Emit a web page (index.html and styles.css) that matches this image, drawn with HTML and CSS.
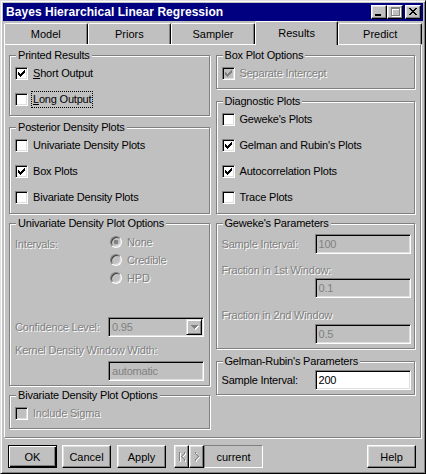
FILE: index.html
```html
<!DOCTYPE html>
<html>
<head>
<meta charset="utf-8">
<title>Bayes Hierarchical Linear Regression</title>
<link rel="stylesheet" href="styles.css">
</head>
<body>
<div class="window">
  <div class="titlebar">
    <span class="title">Bayes Hierarchical Linear Regression</span>
    <div class="tbtns">
      <span class="tbtn"><svg width="14" height="12" viewBox="0 0 14 12"><path d="M3 8h6v2H3z"/></svg></span>
      <span class="tbtn"><svg width="14" height="12" viewBox="0 0 14 12"><path fill="#fff" d="M4 2h9v2H4zM4 4h1v7H4zM12 4h1v7h-1zM4 10h9v1H4z"/><path fill="#808080" d="M3 1h9v2H3zM3 3h1v7H3zM11 3h1v7h-1zM3 9h9v1H3z"/></svg></span>
      <span class="tbtn close"><svg width="14" height="12" viewBox="0 0 14 12"><path transform="translate(3 2)" d="M0 0h2v1H0zM6 0h2v1H6zM1 1h2v1H1zM5 1h2v1H5zM2 2h4v1H2zM3 3h2v1H3zM2 4h4v1H2zM1 5h2v1H1zM5 5h2v1H5zM0 6h2v1H0zM6 6h2v1H6z"/></svg></span>
    </div>
  </div>

  <div class="tabs">
    <div class="tab">Model</div>
    <div class="tab">Priors</div>
    <div class="tab">Sampler</div>
    <div class="tab active">Results</div>
    <div class="tab">Predict</div>
  </div>

  <div class="panel">
    <div class="col col-left">
      <div class="group g-printed">
        <div class="legend">Printed Results</div>
        <div class="rows">
          <div class="row"><span class="cb"><svg class="ck" width="7" height="7" viewBox="0 0 7 7"><path d="M0 2h1v3H0zM1 3h1v3H1zM2 4h1v3H2zM3 3h1v3H3zM4 2h1v3H4zM5 1h1v3H5zM6 0h1v3H6z"/></svg></span><span class="lbl"><u>S</u>hort Output</span></div>
          <div class="row"><span class="cb"></span><span class="lbl focus"><u>L</u>ong Output</span></div>
        </div>
      </div>

      <div class="group g-posterior">
        <div class="legend">Posterior Density Plots</div>
        <div class="rows">
          <div class="row"><span class="cb"></span><span class="lbl">Univariate Density Plots</span></div>
          <div class="row"><span class="cb"><svg class="ck" width="7" height="7" viewBox="0 0 7 7"><path d="M0 2h1v3H0zM1 3h1v3H1zM2 4h1v3H2zM3 3h1v3H3zM4 2h1v3H4zM5 1h1v3H5zM6 0h1v3H6z"/></svg></span><span class="lbl">Box Plots</span></div>
          <div class="row"><span class="cb"></span><span class="lbl">Bivariate Density Plots</span></div>
        </div>
      </div>

      <div class="group g-univ">
        <div class="legend">Univariate Density Plot Options</div>
        <div class="intervals">
          <span class="flabel dis intervals-label">Intervals:</span>
          <div class="radios">
            <div class="rrow"><span class="radio on"></span><span class="dis">None</span></div>
            <div class="rrow"><span class="radio"></span><span class="dis">Credible</span></div>
            <div class="rrow"><span class="radio"></span><span class="dis">HPD</span></div>
          </div>
        </div>
        <div class="frow conf-row">
          <span class="flabel dis">Confidence Level:</span>
          <div class="field select"><span class="val">0.95</span><span class="ddbtn"><svg width="9" height="6" viewBox="0 0 9 6"><path fill="#fff" d="M2 2h7v1H2zM3 3h5v1H3zM4 4h3v1H4zM5 5h1v1H5z"/><path fill="#808080" d="M1 1h7v1H1zM2 2h5v1H2zM3 3h3v1H3zM4 4h1v1H4z"/></svg></span></div>
        </div>
        <div class="flabel dis line-label kernel-label">Kernel Density Window Width:</div>
        <div class="field indent kernel-input"><span class="val">automatic</span></div>
      </div>

      <div class="group g-bivar">
        <div class="legend">Bivariate Density Plot Options</div>
        <div class="rows">
          <div class="row"><span class="cb disabled"></span><span class="lbl dis">Include Sigma</span></div>
        </div>
      </div>
    </div>

    <div class="col col-right">
      <div class="group g-box">
        <div class="legend">Box Plot Options</div>
        <div class="rows">
          <div class="row"><span class="cb disabled"><svg class="ck" width="7" height="7" viewBox="0 0 7 7"><path d="M0 2h1v3H0zM1 3h1v3H1zM2 4h1v3H2zM3 3h1v3H3zM4 2h1v3H4zM5 1h1v3H5zM6 0h1v3H6z"/></svg></span><span class="lbl dis">Separate Intercept</span></div>
        </div>
      </div>

      <div class="group g-diag">
        <div class="legend">Diagnostic Plots</div>
        <div class="rows">
          <div class="row"><span class="cb"></span><span class="lbl">Geweke's Plots</span></div>
          <div class="row"><span class="cb"><svg class="ck" width="7" height="7" viewBox="0 0 7 7"><path d="M0 2h1v3H0zM1 3h1v3H1zM2 4h1v3H2zM3 3h1v3H3zM4 2h1v3H4zM5 1h1v3H5zM6 0h1v3H6z"/></svg></span><span class="lbl">Gelman and Rubin's Plots</span></div>
          <div class="row"><span class="cb"><svg class="ck" width="7" height="7" viewBox="0 0 7 7"><path d="M0 2h1v3H0zM1 3h1v3H1zM2 4h1v3H2zM3 3h1v3H3zM4 2h1v3H4zM5 1h1v3H5zM6 0h1v3H6z"/></svg></span><span class="lbl">Autocorrelation Plots</span></div>
          <div class="row"><span class="cb"></span><span class="lbl">Trace Plots</span></div>
        </div>
      </div>

      <div class="group g-geweke">
        <div class="legend">Geweke's Parameters</div>
        <div class="frow first-frow">
          <span class="flabel dis">Sample Interval:</span>
          <div class="field"><span class="val">100</span></div>
        </div>
        <div class="flabel dis line-label gw-l1">Fraction in 1st Window:</div>
        <div class="field indent gw-i1"><span class="val">0.1</span></div>
        <div class="flabel dis line-label gw-l2">Fraction in 2nd Window</div>
        <div class="field indent gw-i2"><span class="val">0.5</span></div>
      </div>

      <div class="group g-gelman">
        <div class="legend">Gelman-Rubin's Parameters</div>
        <div class="frow first-frow">
          <span class="flabel">Sample Interval:</span>
          <div class="field enabled"><span class="val">200</span></div>
        </div>
      </div>
    </div>
  </div>

  <div class="buttons">
    <button class="btn default">OK</button>
    <button class="btn cancel">Cancel</button>
    <button class="btn apply">Apply</button>
    <div class="nav">
      <span class="navbtn"><svg width="13" height="21" viewBox="0 0 13 21"><path fill="#fff" d="M5 7h1v9H5zM10 7h1v2h-1zM9 9h1v1H9zM8 10h1v1H8zM7 11h1v1H7zM8 12h1v1H8zM9 13h1v1H9zM10 14h1v2h-1z"/><path fill="#808080" d="M4 6h1v9H4zM9 6h1v2H9zM8 8h1v1H8zM7 9h1v1H7zM6 10h1v1H6zM7 11h1v1H7zM8 12h1v1H8zM9 13h1v2H9z"/></svg></span>
      <span class="navbtn"><svg width="13" height="21" viewBox="0 0 13 21"><path fill="#fff" d="M6 7h1v2H6zM7 9h1v1H7zM8 10h1v1H8zM9 11h1v1H9zM8 12h1v1H8zM7 13h1v1H7zM6 14h1v2H6z"/><path fill="#808080" d="M5 6h1v2H5zM6 8h1v1H6zM7 9h1v1H7zM8 10h1v1H8zM7 11h1v1H7zM6 12h1v1H6zM5 13h1v2H5z"/></svg></span>
      <span class="current">current</span>
    </div>
    <button class="btn help">Help</button>
  </div>
</div>
</body>
</html>
```

FILE: styles.css
```css
* { box-sizing: border-box; }
html, body { margin: 0; padding: 0; }
body {
  width: 426px;
  height: 474px;
  overflow: hidden;
  background: #c0c0c0;
  font-family: "Liberation Sans", Arial, sans-serif;
  font-size: 11px;
  color: #000;
}
svg { display: block; shape-rendering: crispEdges; }

.window {
  width: 426px;
  height: 474px;
  background: #c0c0c0;
  border: 1px solid;
  border-color: #dfdfdf #000 #000 #dfdfdf;
  box-shadow: inset 1px 1px #fff, inset -1px -1px #808080;
  padding: 2px;
  display: flex;
  flex-direction: column;
}

/* title bar */
.titlebar {
  height: 18px;
  flex: none;
  background: #000080;
  color: #fff;
  display: flex;
  align-items: center;
  padding: 0 2px 0 3px;
}
.title { font-weight: bold; font-size: 12px; letter-spacing: 0.05px; }
.tbtns { margin-left: auto; display: flex; }
.tbtn {
  width: 16px;
  height: 14px;
  background: #c0c0c0;
  border: 1px solid;
  border-color: #fff #000 #000 #fff;
  box-shadow: inset -1px -1px #808080, inset 1px 1px #dfdfdf;
}
.tbtn.close { margin-left: 2px; }

/* tabs */
.tabs {
  height: 23px;
  flex: none;
  display: flex;
  align-items: flex-end;
  padding: 0 1px;
}
.tab {
  flex: 1;
  height: 21px;
  border: 1px solid;
  border-bottom: 0;
  border-color: #fff #000 transparent #fff;
  border-radius: 2px 2px 0 0;
  box-shadow: inset -1px 0 #808080;
  background: #c0c0c0;
  display: flex;
  align-items: center;
  justify-content: center;
  padding-bottom: 1px;
}
.tab.active {
  height: 24px;
  margin-bottom: -1px;
  position: relative;
  z-index: 1;
  padding-bottom: 2px;
}

/* panel */
.panel {
  flex: none;
  height: 394px;
  margin: 0 2px 0 1px;
  border-top: 1px solid #fff;
  border-left: 1px solid #fff;
  border-right: 1px solid #808080;
  border-bottom: 1px solid #808080;
  box-shadow: 1px 1px 0 #fff;
  padding: 10px 5px 0 4px;
  display: flex;
  gap: 6px;
  letter-spacing: -0.2px;
}
.col { display: flex; flex-direction: column; }
.col-left { width: 201px; }
.col-right { width: 200px; }

.group {
  border: 1px solid #808080;
  box-shadow: inset 1px 1px #fff, 1px 1px 0 #fff;
  flex: none;
}
.legend {
  display: table;
  margin: -7px 0 0 6px;
  padding: 0 2px;
  background: #c0c0c0;
  line-height: 13px;
  white-space: nowrap;
}

.g-printed { height: 61px; }
.g-posterior { height: 87px; margin-top: 11px; }
.g-univ { height: 163px; margin-top: 9px; }
.g-bivar { height: 34px; margin-top: 9px; }

.g-box { height: 34px; }
.g-diag { height: 113px; margin-top: 12px; }
.g-geweke { height: 126px; margin-top: 9px; }
.g-gelman { height: 34px; margin-top: 12px; }

/* checkbox rows */
.rows {
  display: flex;
  flex-direction: column;
  gap: 5px;
  padding: 1px 0 0 5px;
}
.row {
  height: 21px;
  display: flex;
  align-items: center;
  white-space: nowrap;
}
.cb {
  width: 13px;
  height: 13px;
  flex: none;
  background: #fff;
  border: 1px solid;
  border-color: #808080 #fff #fff #808080;
  box-shadow: inset 1px 1px #000, inset -1px -1px #dfdfdf;
  display: flex;
  align-items: center;
  justify-content: center;
}
.cb.disabled { background: #c0c0c0; }
.cb.disabled .ck { fill: #808080; }
.lbl { margin-left: 5px; line-height: 13px; }
.lbl.focus {
  outline: 1px dotted #000;
  outline-offset: 0;
  padding: 1px 1px 1px 1px;
  margin-left: 4px;
}
u { text-decoration: underline; text-underline-offset: 1px; }

.dis { color: #808080; text-shadow: 1px 1px 0 #fff; }

/* univariate options */
.intervals {
  display: flex;
  padding: 3px 0 0 5px;
}
.intervals-label { width: 95px; padding-top: 5px; }
.radios { display: flex; flex-direction: column; }
.rrow {
  height: 18px;
  display: flex;
  align-items: center;
}
.rrow .dis { margin-left: 5px; }
.radio {
  width: 12px;
  height: 12px;
  border-radius: 50%;
  background: #c0c0c0;
  border: 1px solid;
  border-color: #808080 #fff #fff #808080;
  box-shadow: inset 1px 1px #404040, inset -1px -1px #dfdfdf;
  display: flex;
  align-items: center;
  justify-content: center;
}
.radio.on::after {
  content: "";
  width: 4px;
  height: 4px;
  border-radius: 1px;
  background: #808080;
}

.frow {
  display: flex;
  align-items: center;
  height: 20px;
  padding-left: 5px;
}
.frow .flabel { width: 93px; white-space: nowrap; }
.flabel { line-height: 13px; white-space: nowrap; }
.line-label { padding-left: 5px; }
.conf-row { margin-top: 30px; }
.kernel-label { margin-top: 7px; }
.kernel-input { margin-top: 4px; }

.field {
  width: 96px;
  height: 20px;
  flex: none;
  border: 1px solid;
  border-color: #808080 #fff #fff #808080;
  box-shadow: inset 1px 1px #000, inset -1px -1px #dfdfdf;
  background: #c0c0c0;
  color: #808080;
  display: flex;
  align-items: center;
  padding: 0 2px 0 3px;
}
.field.enabled { background: #fff; color: #000; }
.field.indent { margin-left: 98px; }
.select { padding-right: 1px; }
.select .val { flex: 1; }
.ddbtn {
  width: 16px;
  height: 16px;
  background: #c0c0c0;
  border: 1px solid;
  border-color: #dfdfdf #000 #000 #dfdfdf;
  box-shadow: inset 1px 1px #fff, inset -1px -1px #808080;
  display: flex;
  align-items: center;
  justify-content: center;
}

.first-frow { margin-top: 2px; }
.g-geweke .first-frow { margin-top: 4px; }
.gw-l1 { margin-top: 10px; }
.gw-i1 { margin-top: 1px; }
.gw-l2 { margin-top: 11px; }
.gw-i2 { margin-top: 2px; }

/* bottom buttons */
.buttons {
  flex: none;
  margin-top: 7px;
  height: 23px;
  display: flex;
  padding: 0 7px 0 5px;
}
.btn {
  width: 49px;
  height: 23px;
  padding: 0;
  margin: 0;
  font: inherit;
  color: #000;
  background: #c0c0c0;
  border: 1px solid;
  border-color: #fff #000 #000 #fff;
  box-shadow: inset -1px -1px #808080, inset 1px 1px #dfdfdf;
}
.btn.default {
  border-color: #000;
  box-shadow: inset 1px 1px #fff, inset -1px -1px #000, inset -2px -2px #808080;
}
.btn.cancel { margin-left: 5px; }
.btn.apply { margin-left: 6px; }
.btn.help { margin-left: auto; }
.nav { display: flex; margin-left: 8px; }
.navbtn {
  width: 15px;
  height: 23px;
  background: #c0c0c0;
  border: 1px solid;
  border-color: #fff #000 #000 #fff;
  box-shadow: inset -1px -1px #808080, inset 1px 1px #dfdfdf;
}
.current {
  width: 59px;
  height: 23px;
  border: 1px solid;
  border-color: #808080 #fff #fff #808080;
  display: flex;
  align-items: center;
  justify-content: center;
}
```
